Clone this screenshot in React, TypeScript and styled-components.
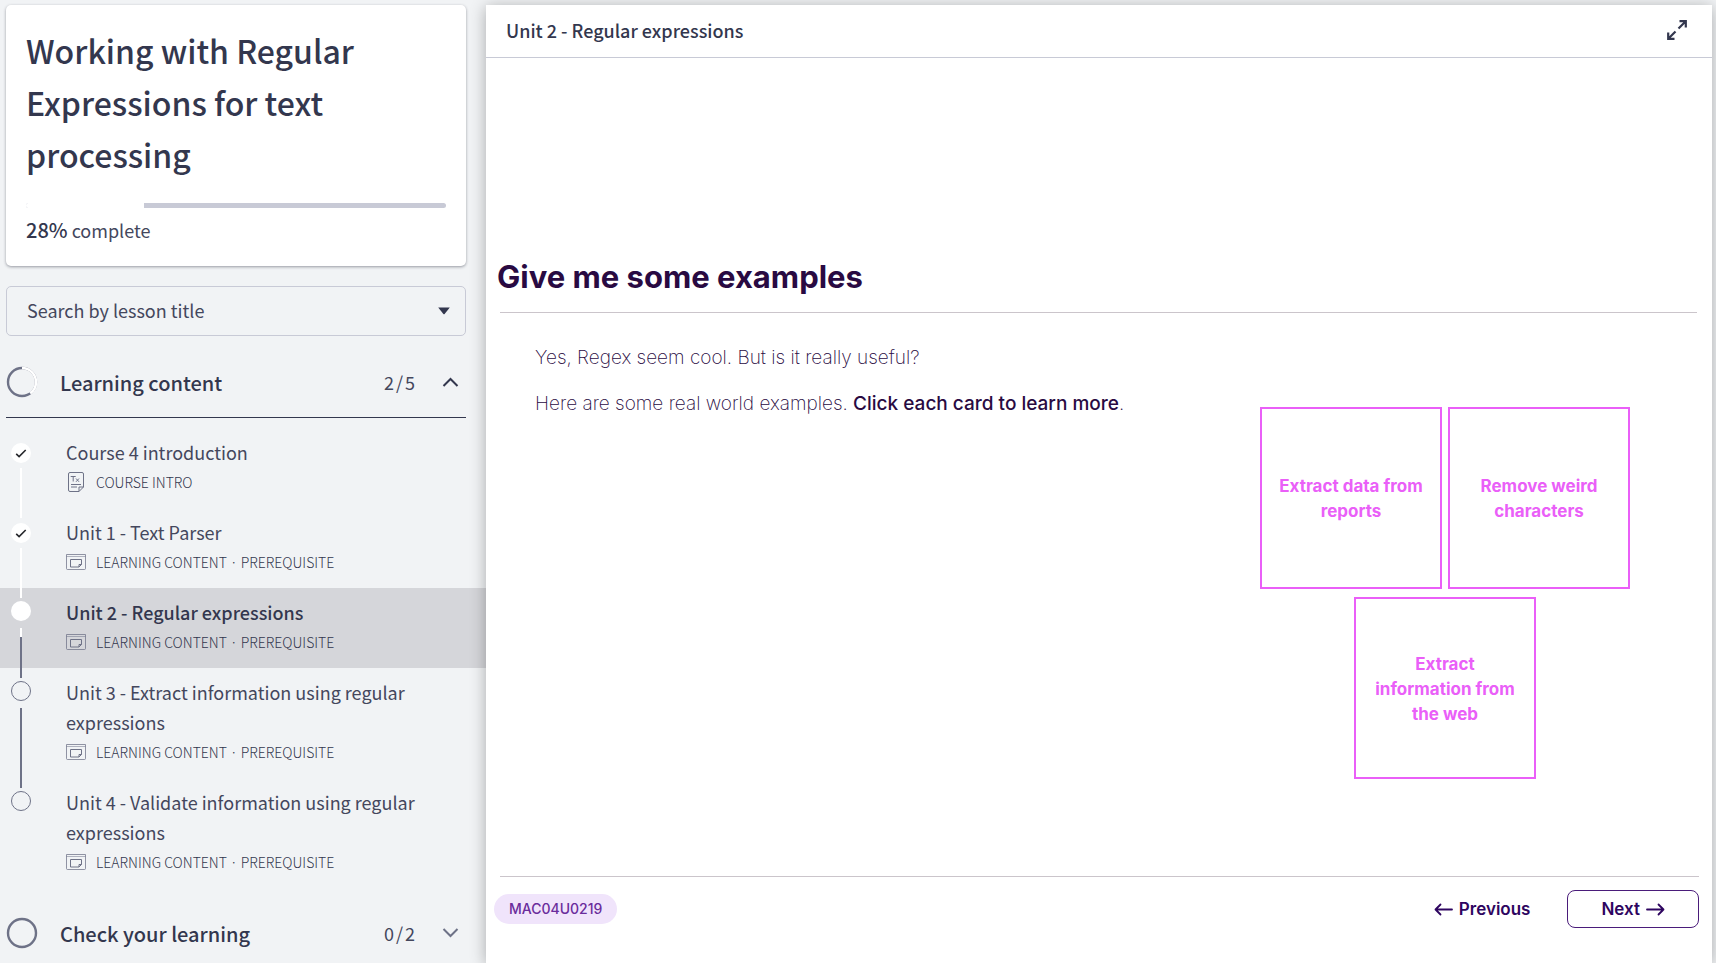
import React from "react";
import styled, { createGlobalStyle, css } from "styled-components";

const ink = "#33374e";
const soft = "#44475d";
const muted = "#6e7287";
const plum = "#290a42";

const GlobalStyle = createGlobalStyle`
  *, *::before, *::after { box-sizing: border-box; }
  body {
    margin: 0;
    background: #f1f3f5;
    color: ${ink};
    font-family: "Noto Sans CJK JP", "Noto Sans", sans-serif;
  }
  h1, h2, p, ul, ol { margin: 0; padding: 0; }
  ul, ol { list-style: none; }
  button, select { font: inherit; color: inherit; cursor: pointer; }
`;

const Page = styled.div`
  display: flex;
  height: 100vh;
  padding: 5px 4px 0 0;
  overflow: hidden;
`;

/* ---------- Sidebar ---------- */

const Sidebar = styled.aside`
  flex: 0 0 486px;
  min-width: 0;
`;

const Inset = styled.div`
  padding: 0 20px 0 6px;
`;

const CourseCard = styled.section`
  padding: 19px 20px 20px;
  background: #fff;
  border-radius: 5px;
  box-shadow: 0 1px 3px rgba(40, 44, 60, 0.45);
`;

const CourseTitle = styled.h1`
  font-size: 32px;
  font-weight: 500;
  line-height: 52px;
`;

const Track = styled.div`
  height: 5px;
  margin-top: 23px;
  border-radius: 3px;
  background: #c8cad6;
  overflow: hidden;
`;

const TrackFill = styled.div`
  height: 100%;
  background: #fff;
`;

const Completion = styled.p`
  margin-top: 6px;
  color: ${soft};
  font-size: 18px;
  font-weight: 400;
  line-height: 32px;

  strong { color: ${ink}; font-size: 20px; font-weight: 500; }
`;

const SearchBox = styled.div`
  display: grid;
  align-items: center;
  margin: 20px 0 11px;

  > * { grid-area: 1 / 1; }
  svg { justify-self: end; margin-right: 15px; pointer-events: none; }
`;

const SearchSelect = styled.select`
  width: 100%;
  height: 50px;
  padding: 0 20px 2px;
  appearance: none;
  background: transparent;
  border: 1px solid #c8cad6;
  border-radius: 5px;
  color: ${soft};
  font-size: 18px;
  font-weight: 400;
`;

const SectionButton = styled.button<{ $open?: boolean }>`
  display: flex;
  align-items: center;
  width: 100%;
  height: 71px;
  padding: 0 7px 0 0;
  background: none;
  border: 0;
  border-bottom: 1px solid ${(p) => (p.$open ? ink : "transparent")};
  text-align: left;
`;

const SectionName = styled.span`
  flex: 1;
  margin-left: 22px;
  font-size: 20px;
  font-weight: 500;
`;

const Count = styled.span`
  display: flex;
  gap: 2px;
  margin-right: 27px;
  color: ${soft};
  font-size: 18px;
  font-weight: 400;
`;

const Lessons = styled.ol`
  padding: 10px 0;
`;

const LessonLink = styled.a<{ $current?: boolean }>`
  display: flex;
  padding: 0 50px 0 11px;
  color: inherit;
  text-decoration: none;
  background: ${(p) => (p.$current ? "#d5d6da" : "transparent")};
`;

type State = "done" | "current" | "todo";

const Rail = styled.span<{ $state: State }>`
  display: flex;
  flex-direction: column;
  align-items: center;
  gap: ${(p) => (p.$state === "done" ? 5 : 7)}px;
  width: 20px;
  padding-top: ${(p) => (p.$state === "done" ? 15 : 13)}px;
`;

const Dot = styled.span<{ $state: State }>`
  display: grid;
  place-items: center;
  width: 20px;
  height: 20px;
  border-radius: 50%;
  ${(p) =>
    p.$state === "todo"
      ? css`border: 1px solid ${muted};`
      : css`background: #fff;`}
`;

const Connector = styled.span<{ $state: State }>`
  position: relative;
  z-index: 1;
  flex: 1;
  width: 2px;
  margin-bottom: -10px;
  background: ${(p) =>
    p.$state === "done"
      ? "#fff"
      : p.$state === "current"
        ? `linear-gradient(#fff 9px, ${muted} 9px)`
        : muted};
`;

const LessonText = styled.span`
  display: block;
  flex: 1;
  padding: 9px 0 11px;
  margin-left: 35px;
`;

const LessonTitle = styled.span<{ $current?: boolean }>`
  display: block;
  color: ${(p) => (p.$current ? ink : soft)};
  font-size: 18px;
  font-weight: ${(p) => (p.$current ? 500 : 400)};
  line-height: 30px;
`;

const Meta = styled.span`
  display: flex;
  align-items: center;
  gap: 10px;
  font-size: 14px;
  font-weight: 300;
  line-height: 30px;
  text-transform: uppercase;
`;

/* ---------- Lesson pane ---------- */

const Pane = styled.main`
  position: relative;
  display: flex;
  flex: 1;
  flex-direction: column;
  min-width: 0;
  background: #fff;
  box-shadow: 0 2px 15px rgba(0, 0, 0, 0.3);
`;

const PaneHeader = styled.header`
  display: flex;
  align-items: center;
  justify-content: space-between;
  height: 53px;
  padding: 0 25px 2px 20px;
  border-bottom: 1px solid #c8cad6;
  font-size: 18px;
  font-weight: 500;
`;

const PaneTitle = styled.h2`
  font: inherit;
  line-height: 30px;
`;

const IconButton = styled.button`
  display: flex;
  padding: 0;
  background: none;
  border: 0;
`;

const Slide = styled.article`
  display: flex;
  flex: 1;
  flex-direction: column;
  padding: 195px 15px 0 14px;
  color: ${plum};
  font-family: Inter, "Liberation Sans", sans-serif;
`;

const SlideTitle = styled.h2`
  padding-bottom: 11px;
  margin: 0 0 29px;
  border-bottom: 1px solid #cbc5cb;
  font-size: 31px;
  font-weight: 700;
  line-height: 48px;
  text-indent: -3px;
`;

const SlideBody = styled.div`
  display: flex;
  flex: 1;
  justify-content: space-between;
  padding: 0 67px 0 35px;
`;

const Copy = styled.div`
  display: grid;
  align-content: start;
  gap: 14px;
  font-size: 19px;
  font-weight: 200;
  line-height: 32px;

  strong { font-weight: 500; }
`;

const Cards = styled.div`
  display: flex;
  flex-wrap: wrap;
  justify-content: center;
  align-content: start;
  gap: 8px 6px;
  width: 370px;
  padding-top: 65px;
`;

const Card = styled.button`
  width: 182px;
  height: 182px;
  padding: 2px 15px 0;
  background: #fff;
  border: 2px solid #ea5ff8;
  color: #ea5ff8;
  font-size: 17px;
  font-weight: 700;
  line-height: 25px;
`;

const SlideFooter = styled.footer`
  display: flex;
  align-items: center;
  height: 87px;
  padding-bottom: 22px;
  margin: 0 13px 0 14px;
  border-top: 1px solid #cbc5cb;
  font-family: Inter, "Liberation Sans", sans-serif;
`;

const Code = styled.span`
  padding: 0 15px;
  margin-left: -6px;
  margin-right: auto;
  border-radius: 15px;
  background: #f0e4fb;
  color: #6a2c9c;
  font-size: 14px;
  font-weight: 500;
  line-height: 30px;
`;

const NavButton = styled.button<{ $outlined?: boolean }>`
  display: flex;
  align-items: center;
  gap: 6px;
  height: 38px;
  padding: 0 ${(p) => (p.$outlined ? 33 : 36)}px;
  background: none;
  border: 1px solid ${(p) => (p.$outlined ? "#4a1c7a" : "transparent")};
  border-radius: 8px;
  color: #2e0560;
  font-size: 17px;
  font-weight: 600;
`;

/* ---------- Icons ---------- */

const Ring = ({ part }: { part: number }) => (
  <svg width="32" height="32" viewBox="0 0 32 32" fill="none" strokeWidth="2.4" aria-hidden="true">
    <circle cx="16" cy="16" r="14" stroke={muted} />
    {part > 0 && (
      <circle
        cx="16" cy="16" r="14" stroke="#fff" strokeWidth="2.6" pathLength="100"
        strokeDasharray={`${part} 100`} transform="rotate(-90 16 16)"
      />
    )}
  </svg>
);

const Chevron = ({ up }: { up?: boolean }) => (
  <svg width="17" height="10" viewBox="0 0 17 10" fill="none" stroke={up ? ink : muted} strokeWidth="2" aria-hidden="true">
    <path d={up ? "M1.5 9 8.5 2l7 7" : "M1.5 1l7 7 7-7"} />
  </svg>
);

const Arrow = ({ left }: { left?: boolean }) => (
  <svg width="19" height="13" viewBox="0 0 19 13" fill="none" stroke="currentColor" strokeWidth="1.8" strokeLinecap="round" strokeLinejoin="round" aria-hidden="true">
    <path d={left ? "M18 6.500H1.500M6.500 1.500l-5 5 5 5" : "M1 6.500h16.500M12.500 1.500l5 5-5 5"} />
  </svg>
);

const Caret = () => (
  <svg width="14" height="8" viewBox="0 0 14 8" fill={ink} aria-hidden="true">
    <path d="M1.2.5h11.6L7.6 7a.8.8 0 0 1-1.2 0z" />
  </svg>
);

const Check = () => (
  <svg width="12" height="9" viewBox="0 0 12 9" fill="none" stroke="#26272c" strokeWidth="1.6" aria-hidden="true">
    <path d="M1.2 4.8 4.1 7.6 10.7 1" />
  </svg>
);

const IntroIcon = () => (
  <svg width="20" height="20" viewBox="0 0 20 20" fill="none" stroke={muted} aria-hidden="true">
    <path d="M4 .5h12a1.500 1.500 0 0 1 1.500 1.500v13L13 19.500H4A1.500 1.500 0 0 1 2.500 18V2A1.500 1.500 0 0 1 4 .5z" />
    <path d="M17.500 15H13v4.500M5 12.500h10M5 15h6M4.700 4.500h5M7.200 4.500v5M10 6.500l3 3.300M13 6.500l-3 3.300" />
  </svg>
);

const ContentIcon = () => (
  <svg width="20" height="16" viewBox="0 0 20 16" fill="none" stroke={muted} aria-hidden="true">
    <path d="M.5.5h19v14a1 1 0 0 1-1 1h-17a1 1 0 0 1-1-1z" strokeOpacity=".75" />
    <path d="M.5 2.500h19" strokeOpacity=".5" />
    <path d="M4.500 5.500h11v5l-2.500 2.500H4.500zM15.500 10.500H13V13" />
  </svg>
);

const ExpandIcon = () => (
  <svg width="20" height="20" viewBox="0 0 20 20" fill="none" stroke={ink} strokeWidth="2.2" aria-hidden="true">
    <path d="M12.500 1.200h6.300v6.300M18.500 1.500 11.500 8.500M7.500 18.800H1.200v-6.300M1.500 18.500l7-7" />
  </svg>
);

/* ---------- Data ---------- */

const lessons: { title: string; state: State; intro?: boolean }[] = [
  { title: "Course 4 introduction", state: "done", intro: true },
  { title: "Unit 1 - Text Parser", state: "done" },
  { title: "Unit 2 - Regular expressions", state: "current" },
  { title: "Unit 3 - Extract information using regular expressions", state: "todo" },
  { title: "Unit 4 - Validate information using regular expressions", state: "todo" },
];

const cards = ["Extract data from reports", "Remove weird characters", "Extract information from the web"];

const percent = 28;

export default function App() {
  return (
    <Page>
      <GlobalStyle />
      <Sidebar>
        <Inset>
          <CourseCard>
            <CourseTitle>Working with Regular Expressions for text processing</CourseTitle>
            <Track role="progressbar" aria-valuenow={percent} aria-label="Course progress">
              <TrackFill style={{ width: `${percent}%` }} />
            </Track>
            <Completion><strong>{percent}%</strong> complete</Completion>
          </CourseCard>
          <SearchBox>
            <SearchSelect aria-label="Search by lesson title">
              <option>Search by lesson title</option>
            </SearchSelect>
            <Caret />
          </SearchBox>
          <SectionButton $open aria-expanded="true">
            <Ring part={40} />
            <SectionName>Learning content</SectionName>
            <Count><span>2</span><span>/</span><span>5</span></Count>
            <Chevron up />
          </SectionButton>
        </Inset>
        <Lessons>
          {lessons.map(({ title, state, intro }, i) => (
            <li key={title}>
              <LessonLink href="#" $current={state === "current"}>
                <Rail $state={state}>
                  <Dot $state={state}>{state === "done" && <Check />}</Dot>
                  {i < lessons.length - 1 && <Connector $state={state} />}
                </Rail>
                <LessonText>
                  <LessonTitle $current={state === "current"}>{title}</LessonTitle>
                  <Meta>
                    {intro ? <IntroIcon /> : <ContentIcon />}
                    {intro ? "Course intro" : "Learning content · Prerequisite"}
                  </Meta>
                </LessonText>
              </LessonLink>
            </li>
          ))}
        </Lessons>
        <Inset>
          <SectionButton aria-expanded="false">
            <Ring part={0} />
            <SectionName>Check your learning</SectionName>
            <Count><span>0</span><span>/</span><span>2</span></Count>
            <Chevron />
          </SectionButton>
        </Inset>
      </Sidebar>
      <Pane>
        <PaneHeader>
          <PaneTitle>Unit 2 - Regular expressions</PaneTitle>
          <IconButton aria-label="Full screen"><ExpandIcon /></IconButton>
        </PaneHeader>
        <Slide>
          <SlideTitle>Give me some examples</SlideTitle>
          <SlideBody>
            <Copy>
              <p>Yes, Regex seem cool. But is it really useful?</p>
              <p>Here are some real world examples. <strong>Click each card to learn more</strong>.</p>
            </Copy>
            <Cards>
              {cards.map((label) => <Card key={label}>{label}</Card>)}
            </Cards>
          </SlideBody>
        </Slide>
        <SlideFooter>
          <Code>MAC04U0219</Code>
          <NavButton><Arrow left />Previous</NavButton>
          <NavButton $outlined>Next<Arrow /></NavButton>
        </SlideFooter>
      </Pane>
    </Page>
  );
}
